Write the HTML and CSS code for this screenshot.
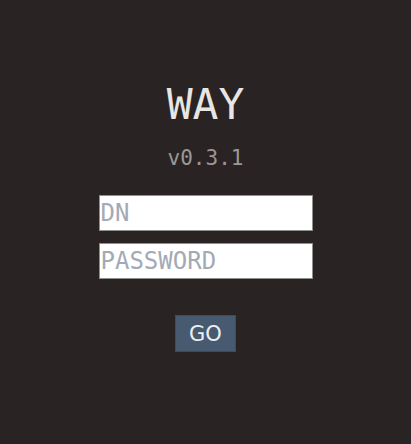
FILE: index.html
```html
<!DOCTYPE html>
<html>
<head>
<meta charset="utf-8">
<link rel="stylesheet" href="styles.css">
</head>
<body>
<main class="login">
  <h1 class="title">WAY</h1>
  <div class="version">v0.3.1</div>
  <form class="form">
    <input class="field" type="text" placeholder="DN">
    <input class="field" type="password" placeholder="PASSWORD">
    <button class="go" type="button">GO</button>
  </form>
</main>
</body>
</html>
```
FILE: styles.css
```css
html, body {
  margin: 0;
  padding: 0;
  height: 100%;
  background: #292423;
  font-family: "DejaVu Sans Mono", monospace;
}
.login {
  display: flex;
  flex-direction: column;
  align-items: center;
  padding-top: 79px;
}
.title {
  margin: 0;
  font-size: 43px;
  font-weight: normal;
  line-height: 51px;
  color: #e8e6e3;
}
.version {
  margin-top: 16px;
  font-size: 21px;
  line-height: 24px;
  color: #9a9796;
}
.form {
  display: flex;
  flex-direction: column;
  align-items: center;
  margin-top: 25px;
  gap: 12px;
}
.field {
  box-sizing: border-box;
  width: 214px;
  height: 36px;
  margin: 0;
  padding: 0 1px;
  border: 1px solid #8f8f8f;
  background: #ffffff;
  font-family: "DejaVu Sans Mono", monospace;
  font-size: 24px;
  color: #333;
  outline: none;
}
.field::placeholder {
  color: #a3aab6;
}
.go {
  box-sizing: border-box;
  margin-top: 24px;
  width: 61px;
  height: 37px;
  padding: 0;
  border: 1px solid #3e4c5c;
  background: #485a70;
  color: #eceef0;
  font-family: "DejaVu Sans", sans-serif;
  font-size: 21px;
}
```
